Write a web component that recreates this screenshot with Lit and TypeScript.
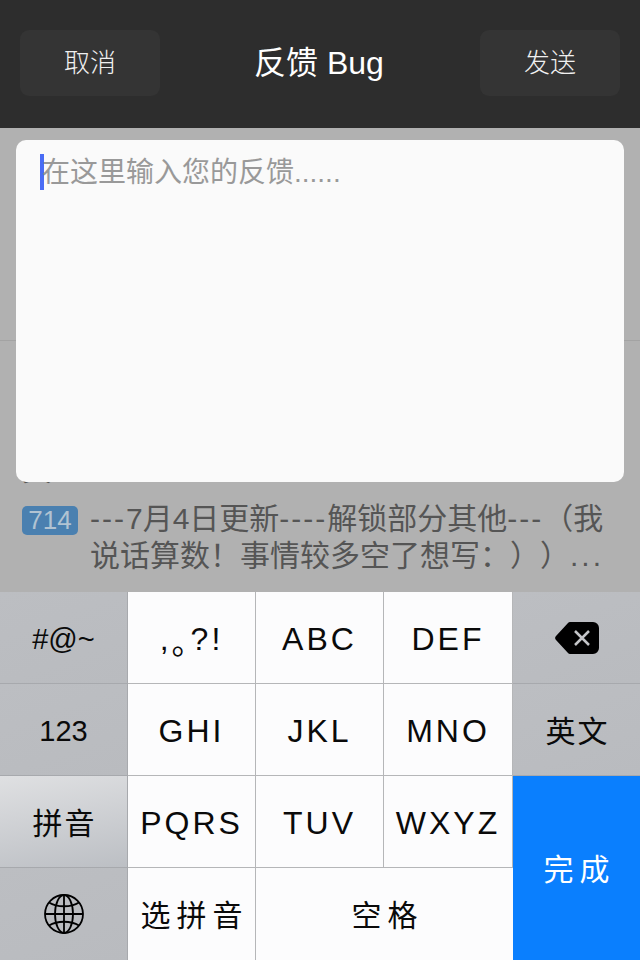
import { LitElement, html, css } from "lit";
import { customElement } from "lit/decorators.js";

@customElement("app-root")
export class AppRoot extends LitElement {
  static styles = css`
    :host {
      display: block;
      width: 640px;
      height: 960px;
      overflow: hidden;
      font-family: "Liberation Sans", "Noto Sans CJK SC", sans-serif;
      text-spacing-trim: space-all;
    }
    .page { display: flex; flex-direction: column; height: 960px; }
    .bar {
      height: 128px;
      flex: none;
      box-sizing: border-box;
      padding: 30px 20px 32px;
      background: #2d2d2d;
      display: flex;
      justify-content: space-between;
      align-items: center;
      color: #fff;
    }
    .btn {
      width: 140px;
      height: 66px;
      border-radius: 9px;
      background: #343434;
      display: flex;
      align-items: center;
      justify-content: center;
      font-size: 26px;
      font-weight: 300;
      color: #f0f0f0;
      padding-bottom: 6px;
      box-sizing: border-box;
    }
    .title { font-size: 32px; line-height: 66px; margin-left: -2px; }
    .content {
      position: relative;
      flex: 1;
      background: #b1b1b1;
      overflow: hidden;
      color: #555;
      font-size: 30px;
      line-height: 37px;
    }
    .row1 { height: 213px; box-sizing: border-box; border-bottom: 1px solid #a3a3a3; }
    .row2 { padding: 110px 22px 0; height: 159px; box-sizing: border-box; }
    .row3 { display: flex; gap: 12px; padding: 0 22px; align-items: flex-start; }
    .badge {
      flex: none;
      width: 56px;
      height: 29px;
      margin-top: 6px;
      border-radius: 5px;
      background: #4a80b0;
      color: #b1c3d2;
      font-size: 26px;
      line-height: 29px;
      text-align: center;
    }
    .dash { letter-spacing: 2px; }
    .dots { letter-spacing: 3px; }
    .card {
      position: absolute;
      left: 16px;
      right: 16px;
      top: 12px;
      height: 342px;
      box-sizing: border-box;
      background: #fafafa;
      border-radius: 10px;
      padding: 14px 24px;
      display: flex;
      align-items: flex-start;
    }
    .caret { width: 4px; height: 36px; background: #4a6cf5; flex: none; margin-right: -2px; }
    .ph { font-size: 28px; line-height: 38px; color: #999; }
    .kb {
      flex: none;
      height: 368px;
      display: grid;
      grid-template-columns: 128px 128px 128px 129px 127px;
      grid-template-rows: repeat(4, 92px);
      background: #fcfcfd;
      color: #0a0a0a;
    }
    .k {
      display: flex;
      align-items: center;
      justify-content: center;
      box-sizing: border-box;
      border-right: 1px solid #b5b6b8;
      border-bottom: 1px solid #b5b6b8;
      font-size: 32px;
      letter-spacing: 3px;
      padding-top: 4px;
    }
    .side {
      background: linear-gradient(160deg, #bcbec2, #b9bbbf);
      border-right-color: #a7a9ad;
      border-bottom-color: #a7a9ad;
      letter-spacing: 0;
      font-size: 29px;
    }
    .ic { padding-top: 0; }
    .zh { font-size: 30px; padding-top: 0; padding-bottom: 2px; letter-spacing: 2px; padding-left: 2px; }
    .wide { letter-spacing: 6px; padding-left: 6px; }
    .on { background: linear-gradient(170deg, #dfe0e2, #bcbfc4); }
    .nr { border-right: none; }
    .done {
      grid-column: 5;
      grid-row: 3 / span 2;
      background: #0a7ffe;
      color: #fff;
      border: none;
    }
    .space { grid-column: 3 / span 2; border-right: none; }
    .last { border-bottom: none; }
    .ring { font-feature-settings: "halt"; }
    svg { display: block; }
  `;

  render() {
    return html`<div class="page">
      <div class="bar">
        <div class="btn">取消</div>
        <div class="title">反馈 Bug</div>
        <div class="btn">发送</div>
      </div>
      <div class="content">
        <div class="row1"></div>
        <div class="row2">其</div>
        <div class="row3">
          <div class="badge">714</div>
          <div>
            <span class="dash">---</span>7月4日更新<span class="dash">----</span>解锁部分其他<span class="dash">---</span>（我<br />说话算数！事情较多空了想写：））<span class="dots">...</span>
          </div>
        </div>
        <div class="card"><div class="caret"></div><div class="ph">在这里输入您的反馈......</div></div>
      </div>
      <div class="kb">
        <div class="k side">#@~</div>
        <div class="k"><span>,</span><span class="ring">。</span><span>?!</span></div>
        <div class="k">ABC</div>
        <div class="k">DEF</div>
        <div class="k side nr ic">
          <svg width="44" height="32" viewBox="0 0 44 32">
            <path d="M15 0H38a6 6 0 0 1 6 6V26a6 6 0 0 1-6 6H15a3 3 0 0 1-2-1L1 18a3 3 0 0 1 0-4L13 1a3 3 0 0 1 2-1Z" fill="#000"/>
            <path d="M20 9L34 23M34 9L20 23" stroke="#c4c5c8" stroke-width="2.5" fill="none"/>
          </svg>
        </div>
        <div class="k side">123</div>
        <div class="k">GHI</div>
        <div class="k">JKL</div>
        <div class="k">MNO</div>
        <div class="k side nr zh">英文</div>
        <div class="k side on zh">拼音</div>
        <div class="k">PQRS</div>
        <div class="k">TUV</div>
        <div class="k">WXYZ</div>
        <div class="k done zh wide">完成</div>
        <div class="k side last ic">
          <svg width="40" height="40" viewBox="0 0 40 40" fill="none" stroke="#000" stroke-width="1.8">
            <circle cx="20" cy="20" r="19"/>
            <ellipse cx="20" cy="20" rx="9" ry="19"/>
            <path d="M20 1V39M1 20H39"/>
            <path d="M5 8.5C13 13.5 27 13.5 35 8.5M5 31.5C13 26.5 27 26.5 35 31.5"/>
          </svg>
        </div>
        <div class="k last zh wide">选拼音</div>
        <div class="k space last zh wide">空格</div>
      </div>
    </div>`;
  }
}
